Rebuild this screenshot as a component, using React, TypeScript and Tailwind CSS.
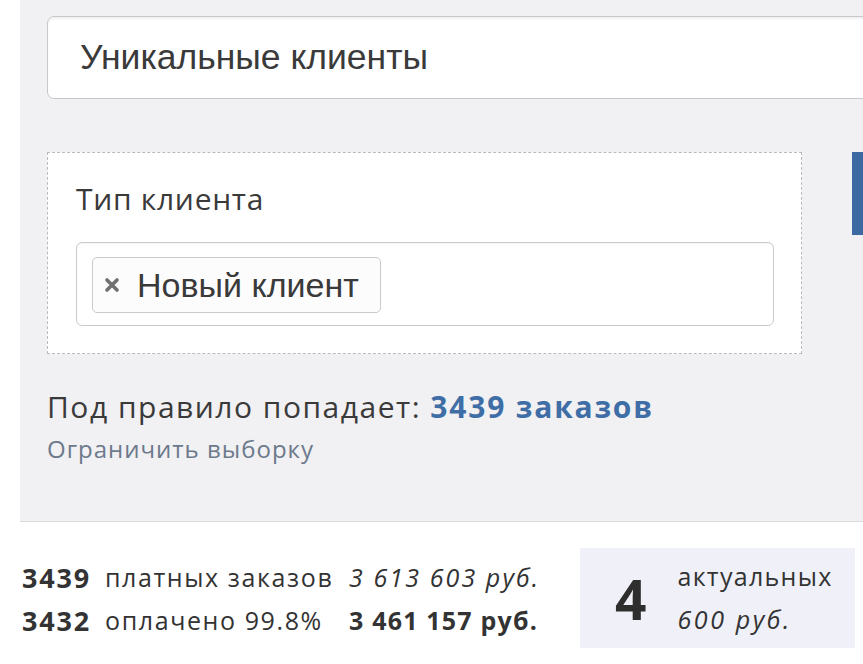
import React from "react";

export default function App() {
  return (
    <div className="w-[863px] h-[664px] bg-white overflow-hidden text-[#333] font-['Open_Sans',sans-serif]">
      <div className="ml-[20px] h-[522px] bg-[#f1f0f3] border-b border-[#dadade] pt-[16px] pl-[27px]">
        <div className="h-[83px] w-[840px] rounded-[7px] border border-[#c8c8cc] bg-white shadow-[inset_0_2px_2px_rgba(0,0,0,0.06)] flex items-center pl-[32px] text-[35.5px] text-[#3a3a3a] font-['Liberation_Sans',sans-serif]">
          Уникальные клиенты
        </div>
        <div className="mt-[53px] flex items-start">
          <div className="shrink-0 w-[755px] h-[202px] border border-dashed border-[#b9b9be] bg-white pl-[28px] pr-[27px] pt-[26px]">
            <div className="text-[30px] leading-[40px] tracking-[0.7px] text-[#3a3a3a]">Тип клиента</div>
            <div className="mt-[23px] h-[84px] rounded-[6px] border border-[#cacace] bg-white pl-[15px] pt-[14px] shadow-[inset_0_1px_1px_rgba(0,0,0,0.04)]">
              <div className="inline-flex items-center h-[56px] rounded-[5px] border border-[#cacace] bg-[#fcfcfc] pl-[11px] pr-[21px] gap-[17px]">
                <svg width="16" height="16" viewBox="0 0 16 16" className="shrink-0">
                  <path d="M3 3 L13 13 M13 3 L3 13" stroke="#707070" strokeWidth="3.6" strokeLinecap="round" />
                </svg>
                <span className="text-[34px] text-[#3a3a3a] leading-none font-['Liberation_Sans',sans-serif]">Новый клиент</span>
              </div>
            </div>
          </div>
          <div className="shrink-0 ml-[50px] w-[20px] h-[83px] bg-[#3c69a2]" />
        </div>
        <div className="mt-[33px] text-[30px] leading-[40px] tracking-[1.5px] text-[#3a3a3a] whitespace-nowrap">
          Под правило попадает: <span className="font-bold text-[#3f6ea6] tracking-[1.8px]">3439 заказов</span>
        </div>
        <div className="mt-[6px] text-[24px] leading-[32px] tracking-[1px] text-[#6c7a8b]">Ограничить выборку</div>
      </div>
      <div className="mt-[26px] flex items-start">
        <div className="ml-[22px] pt-[8px] grid grid-cols-[83px_244px_auto] text-[25px] leading-[43px] tracking-[1.6px] text-[#333] whitespace-nowrap">
          <span className="font-bold text-[27px] tracking-[1.8px]">3439</span>
          <span>платных заказов</span>
          <span className="italic tracking-[2.1px]">3 613 603 руб.</span>
          <span className="font-bold text-[27px] tracking-[1.8px]">3432</span>
          <span>оплачено 99.8%</span>
          <span className="font-bold tracking-[1.2px]">3 461 157 руб.</span>
        </div>
        <div className="ml-auto mr-[8px] w-[275px] h-[100px] bg-[#f0f0f8] flex items-center pl-[35px]">
          <span className="text-[55px] font-bold leading-none text-[#2e2e2e]">4</span>
          <div className="ml-[31px] text-[25px] leading-[43px] tracking-[1.3px] text-[#333] whitespace-nowrap">
            <div>актуальных</div>
            <div className="italic tracking-[2.6px]">600 руб.</div>
          </div>
        </div>
      </div>
    </div>
  );
}
